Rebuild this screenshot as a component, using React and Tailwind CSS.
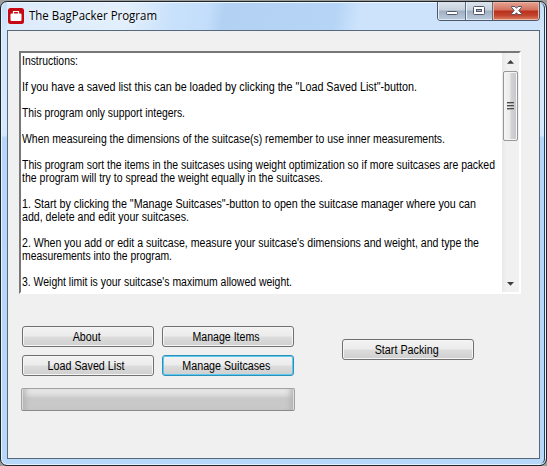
import { useLayoutEffect, useRef } from "react";

const lines = [
  ["Instructions:", 56],
  [],
  ['If you have a saved list this can be loaded by clicking the "Load Saved List"-button.', 395],
  [],
  ["This program only support integers.", 163],
  [],
  ["When measureing the dimensions of the suitcase(s) remember to use inner measurements.", 423],
  [],
  ["This program sort the items in the suitcases using weight optimization so if more suitcases are packed", 473],
  ["the program will try to spread the weight equally in the suitcases.", 301],
  [],
  ['1. Start by clicking the "Manage Suitcases"-button to open the suitcase manager where you can', 454],
  ["add, delete and edit your suitcases.", 167],
  [],
  ["2. When you add or edit a suitcase, measure your suitcase's dimensions and weight, and type the", 457],
  ["measurements into the program.", 150],
  [],
  ["3. Weight limit is your suitcase's maximum allowed weight.", 270],
];

// Condenses the text so that it spans exactly the given width.
function FitText({ text, width, origin = "origin-left" }) {
  const ref = useRef(null);
  useLayoutEffect(() => {
    const el = ref.current;
    el.style.transform = "none";
    const natural = el.getBoundingClientRect().width;
    el.style.transform = `scaleX(${width / natural})`;
  }, [text, width]);
  return (
    <span ref={ref} className={"inline-block whitespace-pre " + origin}>
      {text}
    </span>
  );
}

function Button({ label, width, focused }) {
  return (
    <button
      className={
        "flex h-[21px] w-[132px] items-center justify-center rounded-[3px] border bg-[linear-gradient(#f3f3f3_0%,#ebebeb_49%,#dddddd_51%,#cfcfcf_100%)] pt-[2px] pr-[3px] text-[12px] leading-[17px] text-black " +
        (focused
          ? "border-[#2f8fb8] shadow-[inset_0_0_0_1px_#58cbee]"
          : "border-[#707070] shadow-[inset_0_0_0_1px_#f6f6f6]")
      }
    >
      <FitText text={label} width={width} origin="origin-center" />
    </button>
  );
}

function WindowControls() {
  return (
    <div className="flex h-[19px] w-[103px] overflow-hidden rounded-b-[4px] border border-t-0 border-[#4c5867]">
      <div className="w-[28px] border-r border-[#5f6f82] bg-[linear-gradient(#dce4ec_0%,#c6d1dd_45%,#9fafc3_50%,#bccbdd_100%)] shadow-[inset_1px_0_0_#e9f1f9,inset_0_-1px_0_#dce8f5]">
        <svg width="27" height="18" viewBox="0 0 27 18">
          <rect x="8.5" y="9.5" width="11" height="3" rx="1" fill="#fff" stroke="#535666" />
        </svg>
      </div>
      <div className="w-[27px] border-r border-[#5f6f82] bg-[linear-gradient(#dce4ec_0%,#c6d1dd_45%,#9fafc3_50%,#bccbdd_100%)] shadow-[inset_1px_0_0_#e9f1f9,inset_0_-1px_0_#dce8f5]">
        <svg width="26" height="18" viewBox="0 0 26 18">
          <rect x="7.5" y="4.5" width="11" height="8" rx="1" fill="#fff" stroke="#535666" />
          <rect x="10.5" y="7.5" width="5" height="2" fill="#a9b9cc" stroke="#535666" />
        </svg>
      </div>
      <div className="flex-1 bg-[linear-gradient(#e5a495_0%,#d2705c_45%,#b92f1b_50%,#c4452e_75%,#dc8368_100%)] shadow-[inset_0_0_0_1px_#efb3a3]">
        <svg width="46" height="18" viewBox="0 0 46 18">
          <path
            d="M18.5 4.5H22L23.5 6.3L25 4.5H28.5V5.3L25.8 8.5L28.5 11.7V12.5H25L23.5 10.7L22 12.5H18.5V11.7L21.2 8.5L18.5 5.3Z"
            fill="#fff"
            stroke="#555565"
          />
        </svg>
      </div>
    </div>
  );
}

function Scrollbar() {
  return (
    <div className="flex w-[17px] flex-col items-center bg-[linear-gradient(90deg,#e8e8e8,#f0f0f0_25%,#f1f1f1)]">
      <svg width="17" height="18" viewBox="0 0 17 18">
        <path d="M5 10.7L8.5 7L12 10.7Z" fill="#3c3c3c" />
      </svg>
      <div className="flex h-[70px] w-[15px] flex-col items-center justify-center gap-px rounded-[2px] border border-[#979797] bg-[linear-gradient(90deg,#f4f4f4_0%,#ebebeb_43%,#d3d3d6_55%,#c6c6ca_100%)] shadow-[inset_0_0_0_1px_#f5f5f5]">
        <div className="h-[2px] w-[7px] border-t border-[#4d4d4d] bg-[#aaa]" />
        <div className="h-[2px] w-[7px] border-t border-[#4d4d4d] bg-[#aaa]" />
        <div className="h-[2px] w-[7px] border-t border-[#4d4d4d] bg-[#aaa]" />
      </div>
      <div className="flex-1" />
      <svg width="17" height="16" viewBox="0 0 17 16">
        <path d="M5 6L8.5 9.7L12 6Z" fill="#3c3c3c" />
      </svg>
    </div>
  );
}

export default function App() {
  return (
    <div className="h-[466px] w-[547px] overflow-hidden bg-[#9b9d9c] pt-px font-['Liberation_Sans',Arial,sans-serif] text-black">
      <div className="h-[465px] w-[547px] rounded-[7px] border border-[#20252b] bg-[linear-gradient(#c4ddf6_0px,#d5e8fb_30px,#d6e9fc_133px,#b5d6f8_136px,#b7d8f9_100%)] px-[6px] shadow-[inset_0_0_0_1px_#e4f3ff,inset_-2px_0_0_#2b4052]">
        <div className="flex h-[28px] items-start justify-between bg-[linear-gradient(100deg,#dcebfb_0px,#e2effc_120px,#c9e1fb_165px,#c3defb_200px,#b3d2f3_215px,#b5d4f6_325px,#cde3fc_350px,#cde2fb_100%)] shadow-[inset_0_1px_0_#edf7ff]">
          <div className="flex items-start pt-[6px] pl-px">
            <svg width="16" height="16" viewBox="0 0 16 16">
              <rect width="16" height="16" rx="2.5" fill="#c50812" />
              <rect x="2.5" y="5.5" width="11" height="7.5" rx="1" fill="#fff" />
              <path d="M5.5 6V3.5H10.5V6" fill="none" stroke="#fff" strokeWidth="1.2" />
            </svg>
            <div className="ml-[5px] font-['Open_Sans','Noto_Sans',sans-serif] text-[12px] leading-4 [text-shadow:0_0_6px_#fff]">
              <FitText text="The BagPacker Program" width={128} />
            </div>
          </div>
          <WindowControls />
        </div>
        <div className="h-[429px] w-[533px] border border-[#56697c] bg-[#f0f0f0] pt-[20px] pl-[11px]">
          <div className="flex h-[243px] w-[502px] border-2 border-t-[#777] border-r-white border-b-white border-l-[#777] bg-white">
            <div className="flex-1 overflow-hidden pt-[2px] pl-px text-[12px] leading-[13px]">
              {lines.map(([text, width], i) => (
                <div key={i} className="h-[13px] whitespace-nowrap">
                  {text && <FitText text={text} width={width} />}
                </div>
              ))}
            </div>
            <Scrollbar />
          </div>
          <div className="mt-[32px] ml-[2px] flex">
            <div>
              <div className="ml-px grid w-[272px] grid-cols-2 gap-x-2 gap-y-2">
                <Button label="About" width={28} />
                <Button label="Manage Items" width={67} />
                <Button label="Load Saved List" width={77} />
                <Button label="Manage Suitcases" width={88} focused />
              </div>
              <div className="mt-3 h-[23px] w-[274px] rounded-[2px] border border-[#a2a2a2] border-b-[#8a8a8a] bg-[linear-gradient(#eeeeee_0%,#d9d9d9_30%,#c9c9c9_45%,#c9c9c9_100%)] shadow-[inset_1px_0_0_#dedede,inset_-1px_0_0_#dedede,inset_7px_0_6px_-4px_#b0b0b0,inset_-7px_0_6px_-4px_#b0b0b0]" />
            </div>
            <div className="mt-[13px] ml-[47px]">
              <Button label="Start Packing" width={64} />
            </div>
          </div>
        </div>
      </div>
    </div>
  );
}
